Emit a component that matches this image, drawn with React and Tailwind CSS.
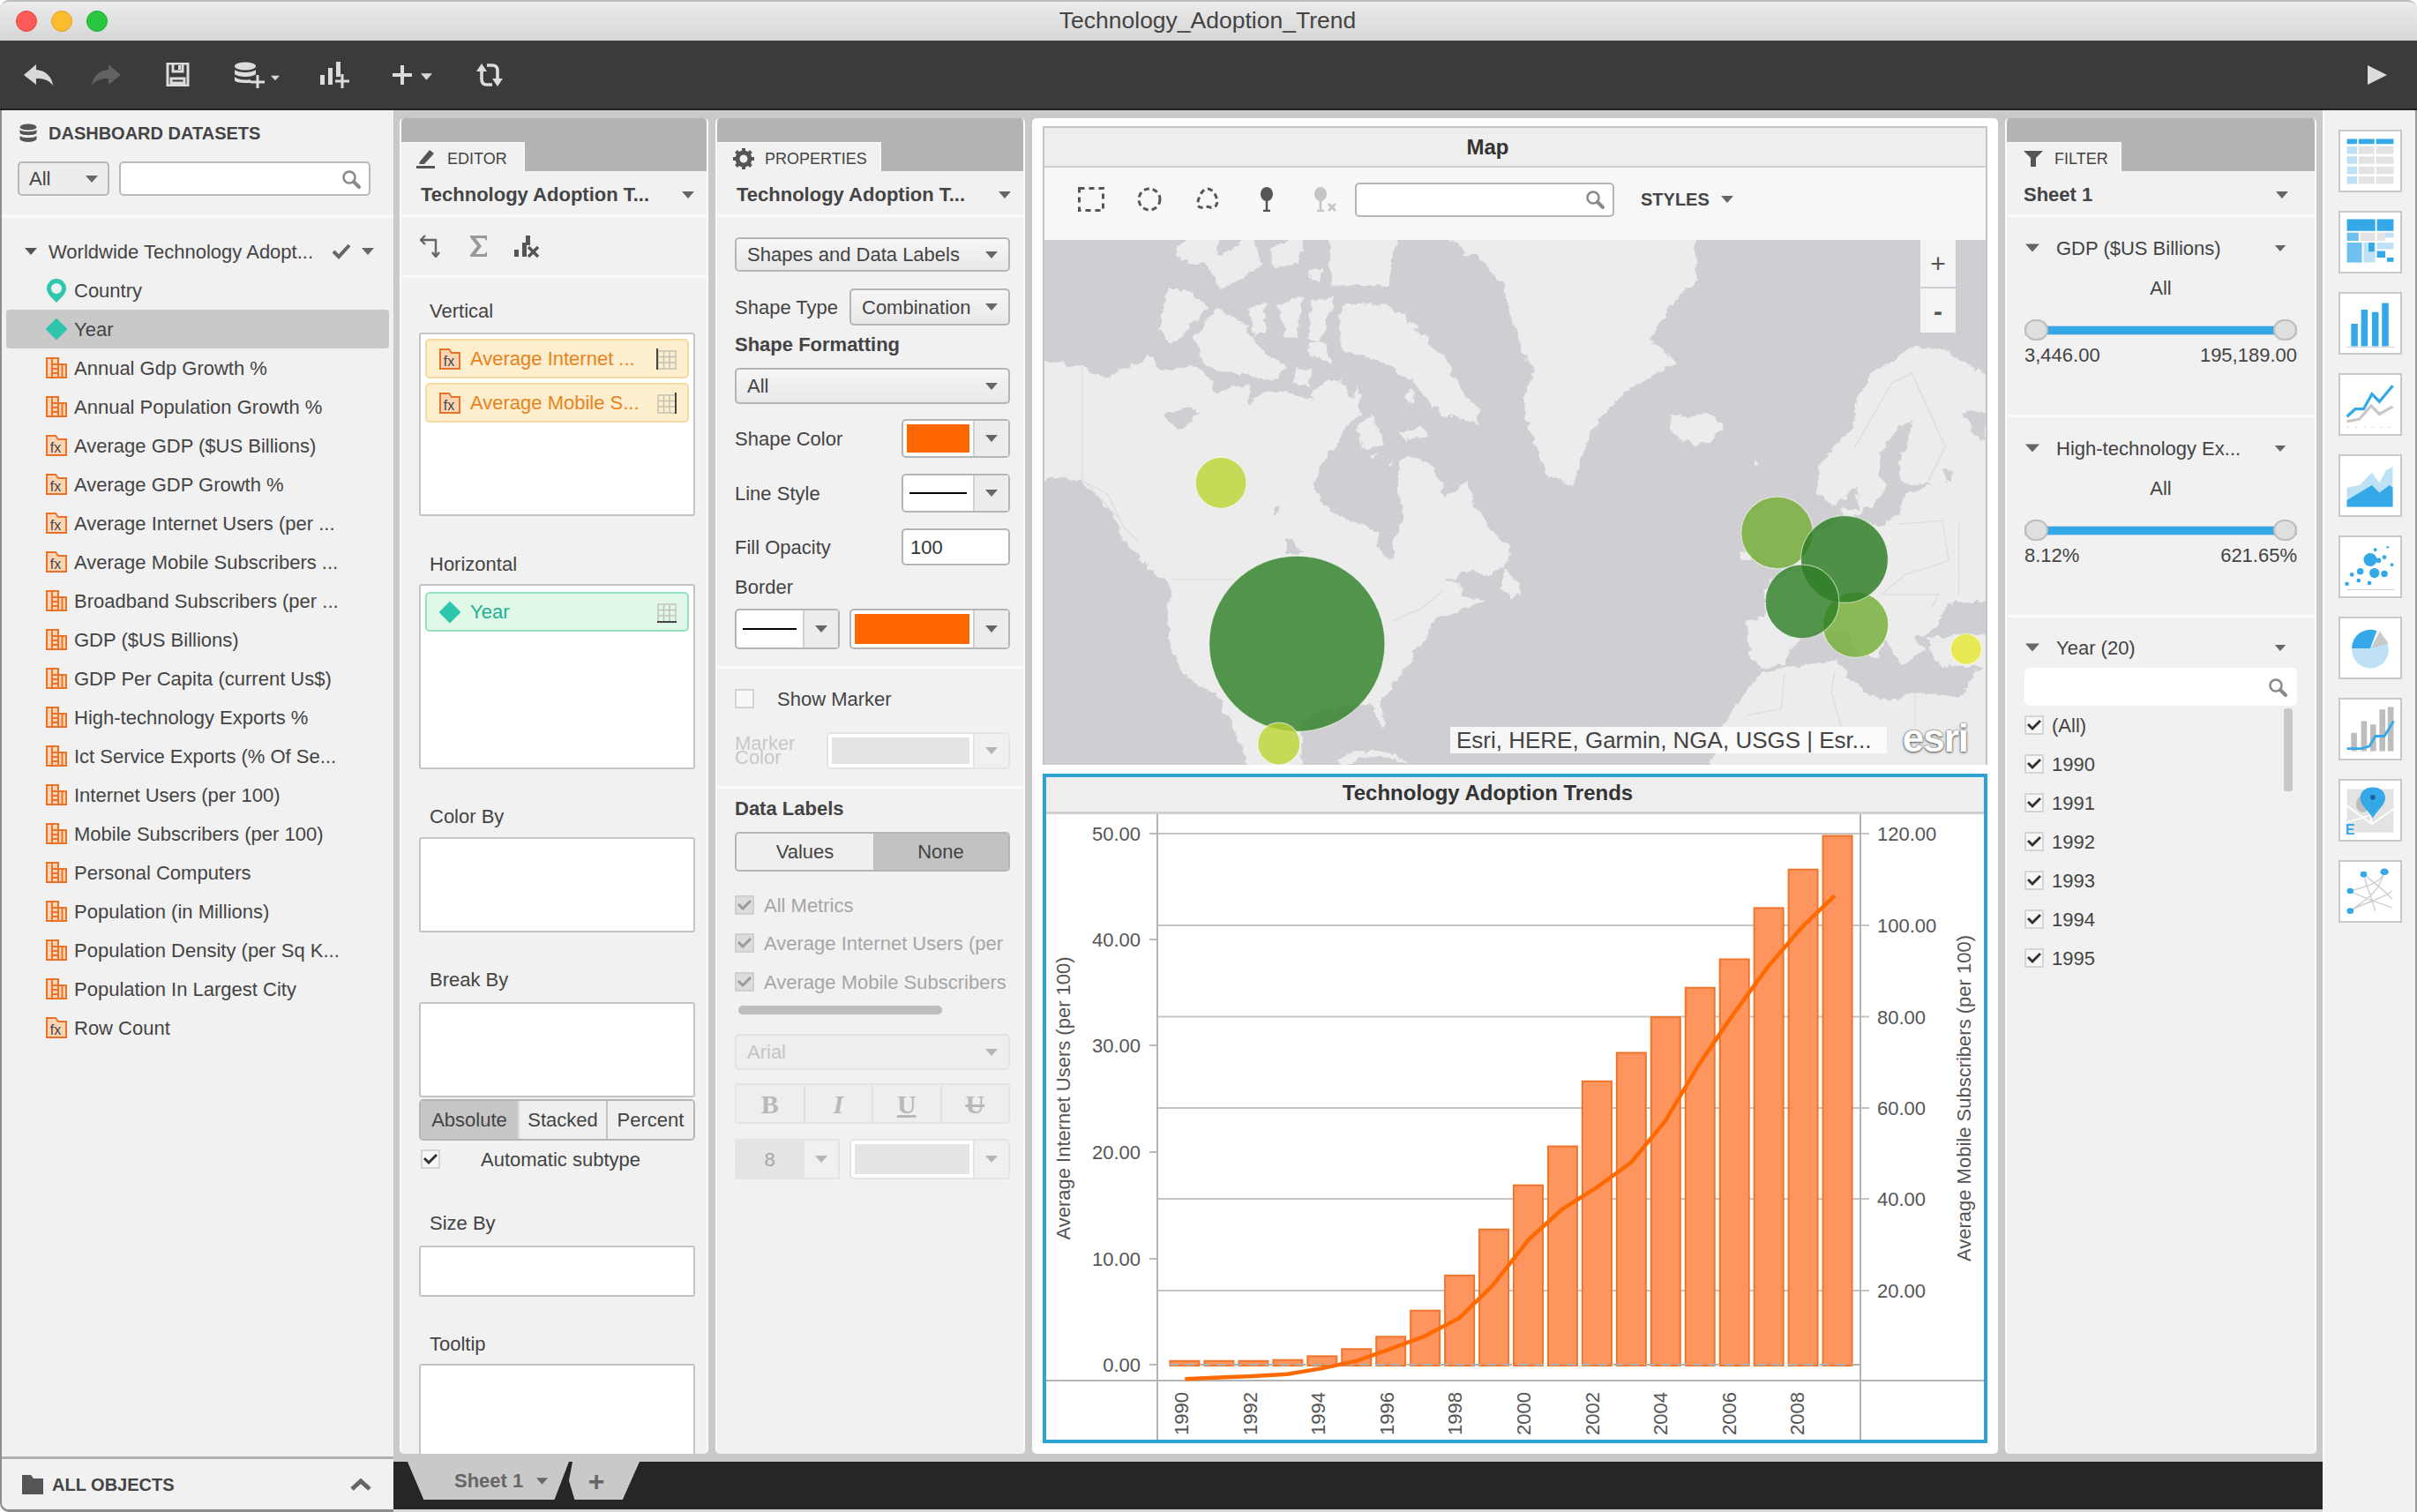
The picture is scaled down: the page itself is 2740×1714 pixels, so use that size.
// App.jsx
import React from "react";

const Caret = ({ className = "", color = "#666", w = 16, h = 9 }) => (
  <svg width={w} height={h} viewBox="0 0 16 9" className={"shrink-0 " + className}>
    <polygon points="0,0 16,0 8,9" fill={color} />
  </svg>
);

const Search = ({ color = "#8a8a8a" }) => (
  <svg width="24" height="24" viewBox="0 0 24 24" className="shrink-0">
    <circle cx="10" cy="10" r="6.5" fill="none" stroke={color} strokeWidth="2.6" />
    <path d="M15 15l6 6" stroke={color} strokeWidth="4" strokeLinecap="round" />
  </svg>
);

const Check = ({ muted = false }) => (
  <span className={"flex items-center justify-center w-[22px] h-[22px] shrink-0 border-2 " + (muted ? "bg-[#dcdcdc] border-[#d0d0d0]" : "bg-[#f6f6f6] border-[#d4d4d4]")}>
    <svg width="16" height="14" viewBox="0 0 16 14">
      <path d="M1 6l5 5 9-9" fill="none" stroke={muted ? "#9a9a9a" : "#333"} strokeWidth="3" />
    </svg>
  </span>
);

const BarDoc = () => (
  <svg width="24" height="24" viewBox="0 0 24 24" className="shrink-0">
    <path d="M1 1h13v7h9v15H1z" fill="#fcd6b4" stroke="#e8722a" strokeWidth="2" />
    <path d="M7 1v22M7 8h7M7 13h7M7 18h7M14 8v15M18.500 8v15" fill="none" stroke="#e8722a" strokeWidth="2" />
  </svg>
);

const FxDoc = () => (
  <svg width="24" height="24" viewBox="0 0 24 24" className="shrink-0">
    <path d="M1 1h10l3 4h9v18H1z" fill="#fcd6b4" stroke="#e8722a" strokeWidth="2" />
    <text x="11" y="20" textAnchor="middle" fontSize="16" fontFamily="'Liberation Sans',sans-serif" fill="#444">fx</text>
  </svg>
);

const Diamond = ({ size = 24 }) => (
  <svg width={size} height={size} viewBox="0 0 24 24" className="shrink-0">
    <polygon points="12,1 23,12 12,23 1,12" fill="#2ec6ad" stroke="#2ec6ad" strokeWidth="2" strokeLinejoin="round" />
  </svg>
);

const Pin = () => (
  <svg width="24" height="28" viewBox="0 0 24 28" className="shrink-0">
    <path d="M12 1a11 11 0 0 1 11 11c0 6-6 11-11 16C7 23 1 18 1 12A11 11 0 0 1 12 1z" fill="#2ec6ad" />
    <circle cx="12" cy="12" r="6" fill="#f1f1f1" />
  </svg>
);

const fields = [
  ["Annual Gdp Growth %", "bar"],
  ["Annual Population Growth %", "bar"],
  ["Average GDP ($US Billions)", "fx"],
  ["Average GDP Growth %", "fx"],
  ["Average Internet Users (per ...", "fx"],
  ["Average Mobile Subscribers ...", "fx"],
  ["Broadband Subscribers (per ...", "bar"],
  ["GDP ($US Billions)", "bar"],
  ["GDP Per Capita (current Us$)", "bar"],
  ["High-technology Exports %", "bar"],
  ["Ict Service Exports (% Of Se...", "bar"],
  ["Internet Users (per 100)", "bar"],
  ["Mobile Subscribers (per 100)", "bar"],
  ["Personal Computers", "bar"],
  ["Population (in Millions)", "bar"],
  ["Population Density (per Sq K...", "bar"],
  ["Population In Largest City", "bar"],
  ["Row Count", "fx"],
];

const TitleBar = () => (
  <div className="relative flex items-center h-[46px] shrink-0 rounded-t-[10px] border-t-2 border-[#bdbdbd] bg-gradient-to-b from-[#ececec] to-[#d6d6d6]">
    <div className="flex items-center gap-[16px] pl-[18px]">
      <span className="w-[24px] h-[24px] rounded-full bg-[#fc5b57] border border-[#df4744]" />
      <span className="w-[24px] h-[24px] rounded-full bg-[#fdbc2e] border border-[#dfa023]" />
      <span className="w-[24px] h-[24px] rounded-full bg-[#29c73f] border border-[#1fab30]" />
    </div>
    <div className="flex-1 text-center text-[26.5px] text-[#444] pr-[124px]">Technology_Adoption_Trend</div>
  </div>
);

const Toolbar = () => (
  <div className="flex items-center h-[79px] shrink-0 pl-[26px] pr-[33px] bg-[#3b3b3b] border-b-2 border-[#222] text-[#d8d8d8]">
    <svg width="35" height="26" viewBox="0 0 35 26">
      <path d="M15 1L1 13l14 11v-7c8 0 14 1 19 8-1-10-8-17-19-18z" fill="#d8d8d8" />
    </svg>
    <svg width="35" height="26" viewBox="0 0 35 26" className="ml-[42px]">
      <path d="M20 1l14 12-14 11v-7c-8 0-14 1-19 8 1-10 8-17 19-18z" fill="#626262" />
    </svg>
    <svg width="27" height="27" viewBox="0 0 27 27" className="ml-[50px]">
      <path d="M2 1h23v25H2zM8 1v9h11V1M6 18h15v5H6z" fill="none" stroke="#dcdcdc" strokeWidth="3" />
      <path d="M14 3h3v5h-3z" fill="#dcdcdc" />
    </svg>
    <svg width="36" height="30" viewBox="0 0 36 30" className="ml-[50px]">
      <ellipse cx="13" cy="5" rx="12" ry="4.5" fill="#dcdcdc" />
      <path d="M1 9c4 4 20 4 24 0v5c-4 4-20 4-24 0zM1 17c4 4 14 4 18 3v4h-6c-6 0-12-1-12-3z" fill="#dcdcdc" />
      <path d="M27 15v15M19 23h16" stroke="#dcdcdc" strokeWidth="3" />
    </svg>
    <Caret color="#d8d8d8" w={10} h={7} className="ml-[6px] mt-[8px]" />
    <svg width="36" height="32" viewBox="0 0 36 32" className="ml-[44px]">
      <path d="M2 16h5v11H2zM11 8h5v19h-5zM20 1h5v17h-5z" fill="#dcdcdc" />
      <path d="M27 15v16M19 23h16" stroke="#dcdcdc" strokeWidth="3" />
    </svg>
    <svg width="24" height="24" viewBox="0 0 24 24" className="ml-[47px]">
      <path d="M12 1v22M1 12h22" stroke="#dcdcdc" strokeWidth="4" />
    </svg>
    <Caret color="#d8d8d8" w={13} h={8} className="ml-[9px] mt-[4px]" />
    <svg width="30" height="30" viewBox="0 0 30 30" className="ml-[50px]">
      <path d="M6 8v12c0 4 2 6 6 6h6M24 22V10c0-4-2-6-6-6h-6" fill="none" stroke="#dcdcdc" strokeWidth="3.6" />
      <path d="M0 11l6-9 6 9zM18 19l6 9 6-9z" fill="#dcdcdc" />
    </svg>
    <svg width="24" height="24" viewBox="0 0 24 24" className="ml-auto">
      <polygon points="1,1 23,12 1,23" fill="#dcdcdc" />
    </svg>
  </div>
);

const LeftPanel = () => (
  <div className="flex flex-col w-[446px] shrink-0 bg-[#f1f1f1] border-l-2 border-[#8d8d8d] rounded-bl-[10px] border-b-3">
    <div className="flex items-center h-[51px] pl-[20px] gap-[13px]">
      <svg width="20" height="22" viewBox="0 0 20 22">
        <ellipse cx="10" cy="4" rx="9.5" ry="3.6" fill="#555" />
        <path d="M.5 7c3 3 16 3 19 0v4c-3 3-16 3-19 0zM.5 14c3 3 16 3 19 0v4c-3 4-16 4-19 0z" fill="#555" />
      </svg>
      <span className="text-[20px] font-bold text-[#444]">DASHBOARD DATASETS</span>
    </div>
    <div className="flex items-center mt-[7px] ml-[18px] gap-[11px]">
      <div className="flex items-center justify-between w-[104px] h-[39px] px-[11px] rounded-[5px] border-2 border-[#b9b9b9] bg-[#ededed] text-[22px] text-[#444]">
        All
        <Caret w={14} h={8} />
      </div>
      <div className="flex items-center justify-end w-[285px] h-[39px] pr-[8px] rounded-[5px] border-2 border-[#b9b9b9] bg-white">
        <Search />
      </div>
    </div>
    <div className="mt-[22px] h-[3px] bg-[#fafafa]" />
    <div className="flex items-center h-[44px] mt-[16px] pl-[26px] text-[22px] text-[#444]">
      <Caret w={14} h={14} className="mr-[13px]" color="#555" />
      <span>Worldwide Technology Adopt...</span>
      <svg width="22" height="18" viewBox="0 0 22 18" className="ml-[21px]">
        <path d="M2 9l6 6L20 2" fill="none" stroke="#666" strokeWidth="4" />
      </svg>
      <Caret w={14} h={8} className="ml-[12px]" />
    </div>
    <div className="flex items-center h-[44px] pl-[50px] gap-[8px] text-[22px] text-[#444]">
      <Pin />
      Country
    </div>
    <div className="flex items-center h-[44px] mx-[5px] pl-[45px] gap-[8px] rounded-[4px] bg-[#c9c9c9] text-[22px] text-[#444]">
      <Diamond />
      Year
    </div>
    {fields.map(([name, kind]) => (
      <div key={name} className="flex items-center h-[44px] pl-[50px] gap-[8px] text-[22px] text-[#444] whitespace-nowrap">
        {kind === "bar" ? <BarDoc /> : <FxDoc />}
        {name}
      </div>
    ))}
    <div className="mt-auto flex items-center h-[60px] pl-[22px] pr-[25px] border-t-3 border-[#b0b0b0]">
      <svg width="26" height="24" viewBox="0 0 26 24">
        <path d="M1 1h10l3 4h11v18H1z" fill="#555" />
      </svg>
      <span className="ml-[9px] text-[20px] font-bold text-[#444]">ALL OBJECTS</span>
      <svg width="24" height="14" viewBox="0 0 24 14" className="ml-auto">
        <path d="M2 12L12 3l10 9" fill="none" stroke="#666" strokeWidth="5" />
      </svg>
    </div>
  </div>
);

const PanelTab = ({ icon, label, width }) => (
  <div className="flex items-end h-[60px] shrink-0 bg-[#b3b3b3]">
    <div className="flex items-center h-[33px] pt-[3px] bg-[#f1f1f1] border-r-2 border-t-2 border-[#f6f6f6]" style={{ width }}>
      {icon}
      <span className="text-[18px] text-[#444]">{label}</span>
    </div>
  </div>
);

const TitleRow = ({ title, caretClass = "", pad = "pl-[22px]" }) => (
  <div className={"flex items-center justify-between h-[52px] shrink-0 pt-[4px] pr-[14px] border-b-3 border-[#fafafa] " + pad}>
    <span className="text-[22px] font-bold text-[#444]">{title}</span>
    <Caret w={14} h={8} className={caretClass} />
  </div>
);

const Drop = ({ children, className = "", muted = false }) => (
  <div className={"flex items-center justify-between pl-[12px] pr-[12px] rounded-[5px] border-2 text-[22px] " + (muted ? "border-[#e2e2e2] bg-[#eeeeee] text-[#c4c4c4] " : "border-[#b5b5b5] bg-gradient-to-b from-[#f6f6f6] to-[#e8e8e8] text-[#444] ") + className}>
    {children}
    <Caret w={14} h={8} color={muted ? "#b5b5b5" : "#666"} />
  </div>
);

const Swatch = ({ className = "", fill, line, muted = false }) => (
  <div className={"flex rounded-[5px] border-2 bg-white " + (muted ? "border-[#e4e4e4] " : "border-[#b5b5b5] ") + className}>
    <div className="flex flex-1 items-center p-[4px]">
      {line ? <div className="w-full h-[2px] mx-[3px] bg-black" /> : <div className={"w-full h-full " + fill} />}
    </div>
    <div className={"flex items-center justify-center w-[40px] shrink-0 border-l-2 " + (muted ? "border-[#e4e4e4] bg-[#f0f0f0]" : "border-[#d0d0d0] bg-[#ececec]")}>
      <Caret w={14} h={8} color={muted ? "#b5b5b5" : "#666"} />
    </div>
  </div>
);

const Pill = ({ label, green, tail, className = "" }) => (
  <div className={"flex items-center h-[45px] pl-[14px] pr-[12px] rounded-[5px] border-2 text-[22px] whitespace-nowrap " + (green ? "bg-[#e0f8e8] border-[#94e3c0] text-[#1eb092] " : "bg-[#fdeecd] border-[#f5d9a0] text-[#e8831c] ") + className}>
    {green ? <Diamond /> : <FxDoc />}
    <span className="ml-[11px]">{label}</span>
    <svg width="24" height="24" viewBox="0 0 24 24" className="ml-auto shrink-0">
      <path d="M3 3h20v20H3zM3 9.5h20M3 16h20M9.5 3v20M16 3v20" fill="none" stroke="#c4c2b4" strokeWidth="1.5" />
      {tail === "left" && <path d="M2 0v24" stroke="#444" strokeWidth="2" />}
      {tail === "right" && <path d="M23 0v24" stroke="#444" strokeWidth="2" />}
      {tail === "bottom" && <path d="M2 23h22" stroke="#444" strokeWidth="2" />}
    </svg>
  </div>
);

const DropBox = ({ className = "", children }) => (
  <div className={"ml-[20px] mr-[13px] shrink-0 rounded-[3px] border-2 border-[#c4c4c4] bg-white " + className}>{children}</div>
);

const FieldLabel = ({ className = "", children }) => (
  <div className={"h-[26px] shrink-0 ml-[32px] text-[22px] leading-[26px] text-[#444] " + className}>{children}</div>
);

const EditorPanel = () => (
  <div className="flex flex-col w-[350px] shrink-0 overflow-hidden rounded-[5px] border-x-2 border-[#fbfbfb] bg-[#f1f1f1]">
    <PanelTab
      width={140}
      label="EDITOR"
      icon={
        <svg width="24" height="22" viewBox="0 0 24 22" className="ml-[16px] mr-[12px]">
          <path d="M5 14L16 1l5 4-11 12H4zM1 19h21v3H1z" fill="#555" />
        </svg>
      }
    />
    <TitleRow title="Technology Adoption T..." />
    <div className="flex items-center h-[69px] shrink-0 pl-[21px] gap-[28px] border-b-3 border-[#fafafa]">
      <svg width="28" height="26" viewBox="0 0 28 26">
        <path d="M1 6h17v18M6 1L1 6l5 5M14 20l4 5 4-5" fill="none" stroke="#666" strokeWidth="2.4" />
      </svg>
      <svg width="22" height="26" viewBox="0 0 22 26">
        <path d="M1 1h19v6l-3-3H7l7 9-7 9h10l3-3v6H1v-2l8-10-8-10z" fill="#999" />
      </svg>
      <svg width="30" height="26" viewBox="0 0 30 26">
        <path d="M1 17h5v8H1zM10 9h5v16h-5zM14 1h5v11h-5z" fill="#555" />
        <path d="M17 14l11 11M28 14L17 25" stroke="#555" strokeWidth="3.4" />
      </svg>
    </div>
    <FieldLabel className="mt-[25px]">Vertical</FieldLabel>
    <DropBox className="mt-[11px] h-[208px] p-[5px]">
      <Pill label="Average Internet ..." tail="left" />
      <Pill label="Average Mobile S..." tail="right" className="mt-[5px]" />
    </DropBox>
    <FieldLabel className="mt-[42px]">Horizontal</FieldLabel>
    <DropBox className="mt-[9px] h-[210px] p-[7px_5px]">
      <Pill green label="Year" tail="bottom" />
    </DropBox>
    <FieldLabel className="mt-[41px]">Color By</FieldLabel>
    <DropBox className="mt-[10px] h-[108px]" />
    <FieldLabel className="mt-[41px]">Break By</FieldLabel>
    <DropBox className="mt-[12px] h-[108px]" />
    <div className="flex ml-[20px] mr-[13px] mt-[2px] h-[47px] shrink-0 overflow-hidden rounded-[5px] border-2 border-[#b5b5b5] text-[22px] text-[#444]">
      <div className="flex items-center justify-center w-[112px] bg-[#c6c6c6] border-r-2 border-[#dcdcdc]">Absolute</div>
      <div className="flex items-center justify-center w-[100px] bg-[#efefef] border-r-2 border-[#c4c4c4]">Stacked</div>
      <div className="flex items-center justify-center flex-1 bg-[#efefef]">Percent</div>
    </div>
    <div className="flex items-center h-[28px] shrink-0 mt-[7px] ml-[22px] text-[22px] text-[#444]">
      <Check />
      <span className="ml-[46px]">Automatic subtype</span>
    </div>
    <FieldLabel className="mt-[46px]">Size By</FieldLabel>
    <DropBox className="mt-[12px] h-[58px]" />
    <FieldLabel className="mt-[41px]">Tooltip</FieldLabel>
    <DropBox className="mt-[9px] h-[110px]" />
  </div>
);

const PropLabel = ({ children, className = "" }) => (
  <span className={"text-[22px] text-[#444] " + className}>{children}</span>
);

const MutedCheck = ({ label, className = "" }) => (
  <div className={"flex items-center h-[28px] gap-[11px] text-[22px] text-[#a6a6a6] whitespace-nowrap overflow-hidden " + className}>
    <Check muted />
    {label}
  </div>
);

const PropertiesPanel = () => (
  <div className="flex flex-col w-[351px] shrink-0 overflow-hidden rounded-[5px] border-x-2 border-[#fbfbfb] bg-[#f1f1f1]">
    <PanelTab
      width={186}
      label="PROPERTIES"
      icon={
        <svg width="24" height="24" viewBox="0 0 24 24" className="ml-[18px] mr-[12px]">
          <circle cx="12" cy="12" r="7" fill="none" stroke="#555" strokeWidth="5" />
          <path d="M12 0v5M12 19v5M0 12h5M19 12h5M3.5 3.5L7 7M17 17l3.500 3.500M20.500 3.500L17 7M7 17l-3.500 3.500" stroke="#555" strokeWidth="4" />
        </svg>
      }
    />
    <TitleRow title="Technology Adoption T..." />
    <div className="flex flex-col pl-[20px] pr-[15px] pb-[19px] border-b-3 border-[#fafafa]">
      <Drop className="h-[39px] mt-[23px]">Shapes and Data Labels</Drop>
      <div className="flex items-center justify-between mt-[19px] h-[42px]">
        <PropLabel>Shape Type</PropLabel>
        <Drop className="w-[182px] h-[42px]">Combination</Drop>
      </div>
      <PropLabel className="mt-[9px] h-[26px] leading-[26px] font-bold">Shape Formatting</PropLabel>
      <Drop className="h-[41px] mt-[13px]">All</Drop>
      <div className="flex items-center justify-between mt-[17px] h-[44px]">
        <PropLabel>Shape Color</PropLabel>
        <Swatch className="w-[123px] h-[44px]" fill="bg-[#ff6600]" />
      </div>
      <div className="flex items-center justify-between mt-[18px] h-[44px]">
        <PropLabel>Line Style</PropLabel>
        <Swatch className="w-[123px] h-[44px]" line />
      </div>
      <div className="flex items-center justify-between mt-[18px] h-[42px]">
        <PropLabel>Fill Opacity</PropLabel>
        <div className="flex items-center w-[123px] h-[42px] pl-[8px] rounded-[5px] border-2 border-[#b5b5b5] bg-white text-[22px] text-[#333]">100</div>
      </div>
      <PropLabel className="mt-[12px] h-[26px] leading-[26px]">Border</PropLabel>
      <div className="flex justify-between mt-[11px]">
        <Swatch className="w-[119px] h-[46px]" line />
        <Swatch className="w-[182px] h-[46px]" fill="bg-[#ff6600]" />
      </div>
    </div>
    <div className="flex flex-col pl-[20px] pr-[15px] pb-[19px] border-b-3 border-[#fafafa]">
      <div className="flex items-center h-[28px] mt-[20px] text-[22px] text-[#444]">
        <span className="w-[22px] h-[22px] border-2 border-[#d4d4d4] bg-[#f8f8f8]" />
        <span className="ml-[26px]">Show Marker</span>
      </div>
      <div className="flex items-center justify-between mt-[24px] h-[42px]">
        <span className="text-[22px] leading-[16px] text-[#c8c8c8]">Marker<br />Color</span>
        <Swatch muted className="w-[208px] h-[42px]" fill="bg-[#e4e4e4]" />
      </div>
    </div>
    <div className="flex flex-col pl-[20px] pr-[15px]">
      <PropLabel className="mt-[10px] h-[26px] leading-[26px] font-bold">Data Labels</PropLabel>
      <div className="flex mt-[13px] h-[45px] overflow-hidden rounded-[5px] border-2 border-[#b5b5b5] text-[22px] text-[#444]">
        <div className="flex items-center justify-center w-[155px] bg-[#efefef]">Values</div>
        <div className="flex items-center justify-center flex-1 bg-[#c2c2c2]">None</div>
      </div>
      <MutedCheck label="All Metrics" className="mt-[24px]" />
      <MutedCheck label="Average Internet Users (per" className="mt-[15px]" />
      <MutedCheck label="Average Mobile Subscribers" className="mt-[16px]" />
      <div className="mt-[13px] ml-[4px] w-[231px] h-[10px] rounded-full bg-[#bdbdbd]" />
      <Drop muted className="h-[41px] mt-[22px]">Arial</Drop>
      <div className="flex mt-[15px] h-[46px] rounded-[3px] border-2 border-[#e4e4e4] bg-[#eeeeee] text-[30px] text-[#b8b8b8] font-['Liberation_Serif',serif]">
        <div className="flex flex-1 items-center justify-center border-r-2 border-[#e0e0e0] font-bold">B</div>
        <div className="flex flex-1 items-center justify-center border-r-2 border-[#e0e0e0] font-bold italic">I</div>
        <div className="flex flex-1 items-center justify-center border-r-2 border-[#e0e0e0] font-bold underline">U</div>
        <div className="flex flex-1 items-center justify-center font-bold line-through">U</div>
      </div>
      <div className="flex justify-between mt-[17px]">
        <div className="flex w-[119px] h-[46px] rounded-[3px] border-2 border-[#e4e4e4] bg-[#f0f0f0]">
          <div className="flex flex-1 items-center justify-center bg-[#e4e4e4] text-[22px] text-[#a6a6a6]">8</div>
          <div className="flex items-center justify-center w-[40px] border-l-2 border-[#e4e4e4]">
            <Caret w={14} h={8} color="#b5b5b5" />
          </div>
        </div>
        <Swatch muted className="w-[182px] h-[46px]" fill="bg-[#e4e4e4]" />
      </div>
    </div>
  </div>
);

const land = "#ececec";
const sea = "#cfcfd3";

const MapCanvas = () => (
  <svg viewBox="1184 272 1067 595" preserveAspectRatio="none" className="block w-full h-full">
    <defs>
      <filter id="coast" x="-2%" y="-2%" width="104%" height="104%">
        <feTurbulence type="fractalNoise" baseFrequency="0.09" numOctaves="4" seed="7" result="n" />
        <feDisplacementMap in="SourceGraphic" in2="n" scale="11" xChannelSelector="R" yChannelSelector="G" />
        <feGaussianBlur stdDeviation="0.6" />
      </filter>
    </defs>
    <rect x="1184" y="272" width="1067" height="595" fill={sea} />
    <g filter="url(#coast)">
      {/* north america, traced at crop scale */}
      <g transform="translate(1183,271) scale(.3801)">
        <g fill={land}>
          <path d="M-30 360L60 370 115 385 190 415 230 390 300 365 315 345 350 395 400 380 460 385 510 425 505 460 580 440 620 440 615 495 650 460 720 455 760 470 800 480 800 450 860 420 900 430 925 480 940 430 945 520 900 560 870 620 820 680 810 750 850 810 940 850 1000 880 1005 930 1030 960 1050 940 1045 880 1080 830 1060 760 1060 660 1110 650 1170 680 1195 770 1240 740 1260 720 1290 800 1340 880 1390 920 1385 960 1340 1000 1250 990 1190 1030 1240 1020 1250 1070 1320 1075 1270 1100 1170 1130 1130 1200 1080 1280 1040 1330 1000 1390 1025 1460 1010 1460 980 1390 900 1390 830 1400 770 1440 770 1600 620 1600 585 1500 510 1350 480 1340 430 1310 380 1220 370 1100 380 1030 310 980 240 890 180 780 110 720 30 710 -30 730Z" />
          <path d="M890 200L950 190 1020 195 1080 230 1130 290 1200 360 1220 400 1260 470 1305 510 1290 550 1230 530 1250 600 1220 540 1160 500 1100 420 1010 370 950 350 890 330 880 270Z" />
          <path d="M450 290L510 210 590 240 640 320 720 380 700 420 560 400 480 380Z" />
          <path d="M370 150L420 150 490 200 450 250 380 320 345 270Z" />
          <path d="M610 210L660 190 660 280 630 290ZM700 200L770 170 760 300 720 280ZM800 180L870 175 830 300 790 300ZM790 310L830 300 860 370 800 350ZM760 385L800 390 790 440 740 430Z" />
          <path d="M390 40L440 -20 540 -20 510 60 440 80ZM480 60L560 30 620 -20 650 80 530 150ZM670 30L780 -20 760 70 690 90ZM790 100L830 90 820 130ZM850 30L860 -20 1060 -20 1035 80 1030 140 860 140Z" />
          <path d="M930 560L980 530 1020 610 960 630ZM1060 580L1130 560 1150 590 1080 600ZM1370 980L1430 1050 1400 1070 1360 1040ZM975 650L1000 640 990 660ZM1030 670L1045 655 1035 680ZM1075 470L1100 450 1110 480 1085 490Z" />
          <path d="M870 1560L920 1530 1000 1520 1090 1560 1040 1550 960 1540 900 1575Z" />
          <path d="M1180 -20L1300 60 1370 130 1400 260 1470 370 1440 450 1450 560 1500 700 1568 730 1568 -20Z" />
        </g>
        <g fill={sea}>
          <path d="M360 525L440 500 465 520 400 570 380 550ZM690 800L705 790 695 830 685 830ZM720 900L745 895 775 940 725 935ZM1210 520L1250 550 1260 620 1235 590Z" />
        </g>
      </g>
      {/* atlantic and europe */}
      <g transform="translate(1658,271) scale(.3801)">
        <g fill={land}>
          <path d="M0 -20H690L700 120 620 200 560 300 640 370 500 440 390 560 360 640 330 735 260 680 200 570 180 470 220 400 180 340 150 230 110 100 40 50 0 45Z" />
          <path d="M620 530L680 530 740 515 780 560 740 600 690 620 650 590 620 570Z" />
          <path d="M1060 680L1110 620 1160 570 1180 470 1220 400 1290 360 1350 320 1440 330 1600 430 1600 1070 1500 1080 1450 1090 1400 1170 1350 1190 1380 1230 1340 1260 1310 1270 1260 1190 1240 1250 1180 1240 1150 1170 1080 1170 1000 1190 960 1270 890 1280 855 1240 850 1140 900 1130 905 1030 990 980 1050 880 1130 830 1130 800 1170 810 1185 800 1170 730 1140 770 1100 790 1060 760Z" />
          <path d="M825 930L870 930 860 960 830 960ZM868 660L885 660 880 672 868 672Z" />
          <path d="M770 1455L850 1340 900 1290 1000 1270 1120 1260 1150 1310 1220 1360 1280 1380 1350 1350 1480 1370 1500 1340 1530 1290 1600 1260 1600 1600 740 1600Z" />
          <path d="M1380 1190L1600 1170 1600 1280 1420 1270Z" />
        </g>
        <g fill={sea}>
          <path d="M1345 540L1300 560 1245 640 1240 700 1265 730 1225 800 1190 810 1170 830 1240 860 1300 820 1320 760 1400 735 1310 725 1300 670 1330 590Z" />
          <path d="M1500 510L1560 520 1560 600 1520 590ZM1435 690L1465 690 1460 725 1440 720Z" />
        </g>
      </g>
    </g>
    <path transform="translate(1183,271) scale(.3801)" fill="none" stroke="#dedede" strokeWidth="4" d="M115 385V720L190 760 240 860 280 900M385 1015H570M1040 1140L1130 1100 1190 1050M130 730L220 830" />
    <path transform="translate(1658,271) scale(.3801)" fill="none" stroke="#dedede" strokeWidth="4" d="M1170 620L1280 430 1340 400M1340 400L1440 620 1390 720M1300 850L1430 840 1450 960 1320 1000 1250 1060 1420 1060 1400 1100M1480 840V1060M960 1300L950 1400 850 1420M1110 1290L1100 1350 1130 1460M1350 1360V1450" />
    <g fillOpacity="0.8" stroke="#ffffff" strokeOpacity="0.55" strokeWidth="3">
      <g transform="translate(1183,271) scale(.3801)">
        <circle cx="529" cy="727" r="76" fill="#bdd632" />
        <circle cx="756" cy="1207" r="262" fill="#2d7e24" />
        <circle cx="702" cy="1505" r="63" fill="#bdd632" />
      </g>
      <g transform="translate(1658,271) scale(.3801)">
        <circle cx="938" cy="876" r="107" fill="#73ac32" />
        <circle cx="1172" cy="1150" r="98" fill="#73ac32" />
        <circle cx="1139" cy="955" r="130" fill="#287920" />
        <circle cx="1013" cy="1081" r="110" fill="#2d7e24" />
        <circle cx="1502" cy="1223" r="46" fill="#e7ea2f" />
      </g>
    </g>
  </svg>
);

const MapPanel = () => (
  <div className="flex flex-col h-[724px] shrink-0 border-2 border-[#c4c4c4] border-b-0 overflow-hidden">
    <div className="flex items-center justify-center h-[45px] shrink-0 pr-[62px] bg-[#eeeeee] border-b-2 border-[#cdcdcd] text-[24px] font-bold text-[#333]">Map</div>
    <div className="flex items-center h-[82px] shrink-0 pl-[38px] pb-[10px] bg-[#f7f7f7]">
      <svg width="30" height="28" viewBox="0 0 30 28">
        <rect x="1.500" y="1.500" width="27" height="25" fill="none" stroke="#555" strokeWidth="3" strokeDasharray="6 5" />
      </svg>
      <svg width="28" height="28" viewBox="0 0 28 28" className="ml-[37px]">
        <circle cx="14" cy="14" r="12" fill="none" stroke="#555" strokeWidth="3" strokeDasharray="6 4" />
      </svg>
      <svg width="28" height="28" viewBox="0 0 28 28" className="ml-[38px]">
        <path d="M14 2c6 0 10 8 11 14 0 5-3 8-8 7-3-1-5-1-8 0-4 1-7-1-6-6 1-6 5-15 11-15z" fill="none" stroke="#555" strokeWidth="3" strokeDasharray="6 4" />
      </svg>
      <svg width="18" height="28" viewBox="0 0 18 28" className="ml-[44px]">
        <ellipse cx="9" cy="8" rx="7" ry="8" fill="#555" />
        <path d="M9 14v13M5 27h8" stroke="#555" strokeWidth="2.500" />
      </svg>
      <svg width="28" height="28" viewBox="0 0 28 28" className="ml-[43px]">
        <ellipse cx="9" cy="8" rx="7" ry="8" fill="#c4c4c4" />
        <path d="M9 14v13M5 27h8M18 19l8 8M26 19l-8 8" stroke="#c4c4c4" strokeWidth="2.500" />
      </svg>
      <div className="flex items-center justify-end ml-[20px] w-[294px] h-[39px] pr-[8px] rounded-[5px] border-2 border-[#b5b5b5] bg-white">
        <Search />
      </div>
      <span className="ml-[30px] text-[20px] font-bold text-[#444]">STYLES</span>
      <Caret w={14} h={8} className="ml-[13px]" />
    </div>
    <div className="relative flex-1 min-h-0">
      <MapCanvas />
      <div className="absolute top-0 right-[34px] flex flex-col gap-[2px]">
        <div className="flex items-center justify-center w-[40px] h-[53px] bg-[#f4f4f4] text-[30px] font-light text-[#555]">+</div>
        <div className="flex items-center justify-center w-[40px] h-[50px] bg-[#f4f4f4] text-[30px] font-bold text-[#555]">-</div>
      </div>
      <div className="absolute left-[460px] bottom-[13px] flex items-center h-[30px] w-[495px] pl-[7px] bg-[#ffffffcc] text-[26px] text-[#444] whitespace-nowrap">Esri, HERE, Garmin, NGA, USGS | Esr...</div>
      <div className="absolute right-[20px] bottom-[8px] text-[44px] leading-[44px] font-bold text-white tracking-[-1px] [text-shadow:0_0_2px_#555,0_1px_3px_#555]">esri</div>
    </div>
  </div>
);

const years = [1990, 1992, 1994, 1996, 1998, 2000, 2002, 2004, 2006, 2008];
const barTops = [1250, 1250, 1250, 1248, 1240, 1225, 1199, 1144, 1070, 973, 880, 798, 661, 601, 526, 464, 404, 296, 215, 144];
const lineZoom = [
  [247, 1288], [302, 1285], [357, 1282], [412, 1278], [467, 1266], [524, 1250], [578, 1225], [634, 1198], [690, 1160], [745, 1090],
  [802, 995], [857, 930], [912, 885], [968, 832], [1023, 745], [1078, 625], [1133, 520], [1189, 420], [1245, 335], [1297, 270],
];
const zx = (v) => v / 1.4255 + 1170;
const zy = (v) => v / 1.858 + 870;

const TrendChart = () => (
  <svg viewBox="1186 923 1063 709" className="block w-full flex-1 min-h-0" fontFamily="'Liberation Sans',sans-serif" fontSize="22" fill="#555">
    {[945, 1049, 1152.5, 1256, 1359, 1463].map((y) => (
      <line key={y} x1="1312" x2="2119" y1={y} y2={y} stroke="#c4c4c4" strokeWidth="2" />
    ))}
    {[945, 1065, 1185, 1306, 1427, 1547].map((y) => (
      <line key={y} x1="1303" x2="1312" y1={y} y2={y} stroke="#bbb" strokeWidth="2" />
    ))}
    <line x1="1312" x2="1312" y1="922" y2="1633" stroke="#b4b4b4" strokeWidth="2" />
    <line x1="2109" x2="2109" y1="922" y2="1633" stroke="#b4b4b4" strokeWidth="2" />
    <line x1="1186" x2="2249" y1="1565" y2="1565" stroke="#b4b4b4" strokeWidth="2" />
    {barTops.map((t, i) => {
      const cx = 1343 + i * 38.95;
      const top = zy(t);
      return <rect key={i} x={cx - 16.5} y={top} width="33" height={1548 - top} fill="#ff955e" stroke="#f0752a" strokeWidth="2" />;
    })}
    <line x1="1325" x2="2109" y1="1547" y2="1547" stroke="#b0b0b0" strokeWidth="2" strokeDasharray="11 7" />
    <polyline points={lineZoom.map(([x, y]) => `${zx(x)},${zy(y)}`).join(" ")} fill="none" stroke="#ff6a00" strokeWidth="4.500" strokeLinejoin="round" />
    {[["50.00", 945], ["40.00", 1065], ["30.00", 1185], ["20.00", 1306], ["10.00", 1427], ["0.00", 1547]].map(([t, y]) => (
      <text key={t} x="1293" y={y + 8} textAnchor="end">{t}</text>
    ))}
    {[["120.00", 945], ["100.00", 1049], ["80.00", 1152.5], ["60.00", 1256], ["40.00", 1359], ["20.00", 1463]].map(([t, y]) => (
      <text key={t} x="2128" y={y + 8}>{t}</text>
    ))}
    <text transform="translate(1213,1245) rotate(-90)" textAnchor="middle">Average Internet Users (per 100)</text>
    <text transform="translate(2234,1245) rotate(-90)" textAnchor="middle">Average Mobile Subscribers (per 100)</text>
    {years.map((y, i) => (
      <text key={y} transform={`translate(${1347 + i * 77.6},1627) rotate(-90)`}>{y}</text>
    ))}
  </svg>
);

const ChartPanel = () => (
  <div className="flex flex-col h-[759px] mt-[10px] shrink-0 border-[4px] border-[#2ea2d1] bg-white overflow-hidden">
    <div className="flex items-center justify-center h-[42px] shrink-0 pr-[62px] pb-[3px] bg-[#eeeeee] border-b-3 border-[#d0d0d0] text-[24px] font-bold text-[#333]">Technology Adoption Trends</div>
    <TrendChart />
  </div>
);

const Slider = () => (
  <div className="relative mx-[20px] h-[24px] flex items-center">
    <div className="w-full h-[11px] bg-[#35a8e8] border border-[#bcd4e2]" />
    <span className="absolute left-0 top-0 w-[27px] h-[24px] rounded-full border-2 border-[#bdbdbd] bg-[#dfdfdf]" />
    <span className="absolute right-0 top-0 w-[27px] h-[24px] rounded-full border-2 border-[#bdbdbd] bg-[#dfdfdf]" />
  </div>
);

const FilterHead = ({ label, className = "" }) => (
  <div className={"flex items-center h-[30px] pl-[21px] pr-[32px] text-[22px] text-[#444] whitespace-nowrap " + className}>
    <Caret w={16} h={10} className="mr-[19px]" />
    <span>{label}</span>
    <Caret w={14} h={7} className="ml-auto" />
  </div>
);

const RangeBlock = ({ label, lo, hi }) => (
  <div className="flex flex-col h-[227px] shrink-0 pt-[20px] border-b-3 border-[#fafafa]">
    <FilterHead label={label} />
    <div className="mt-[16px] h-[30px] leading-[30px] text-center text-[22px] text-[#444]">All</div>
    <div className="mt-[20px]"><Slider /></div>
    <div className="flex justify-between mx-[20px] mt-[3px] h-[28px] leading-[28px] text-[22px] text-[#444]">
      <span>{lo}</span>
      <span>{hi}</span>
    </div>
  </div>
);

const filterRows = ["(All)", "1990", "1991", "1992", "1993", "1994", "1995"];

const FilterPanel = () => (
  <div className="flex flex-col w-[353px] shrink-0 overflow-hidden rounded-[5px] border-x-2 border-[#fbfbfb] bg-[#f1f1f1]">
    <PanelTab
      width={130}
      label="FILTER"
      icon={
        <svg width="24" height="20" viewBox="0 0 24 20" className="ml-[18px] mr-[12px]">
          <path d="M1 1h22L15 9v10H9V9z" fill="#555" />
        </svg>
      }
    />
    <TitleRow title="Sheet 1" caretClass="mr-[16px]" pad="pl-[19px]" />
    <RangeBlock label="GDP ($US Billions)" lo="3,446.00" hi="195,189.00" />
    <RangeBlock label="High-technology Ex..." lo="8.12%" hi="621.65%" />
    <div className="relative flex flex-col pt-[19px]">
      <FilterHead label="Year (20)" />
      <div className="flex items-center justify-end mx-[20px] mt-[8px] h-[43px] pr-[10px] rounded-[6px] bg-white">
        <Search />
      </div>
      <div className="flex flex-col">
        {filterRows.map((r) => (
          <div key={r} className="flex items-center h-[44px] pl-[20px] gap-[9px] text-[22px] text-[#444]">
            <Check />
            {r}
          </div>
        ))}
      </div>
      <span className="absolute right-[25px] top-[103px] w-[10px] h-[94px] rounded-[3px] bg-[#c8c8c8]" />
    </div>
  </div>
);

const Thumb = ({ children }) => (
  <div className="w-[72px] h-[71px] border-2 border-[#c8c8c8] bg-white">
    <svg width="68" height="67" viewBox="0 0 72 71" preserveAspectRatio="none">{children}</svg>
  </div>
);

const blue = "#35a8e8";
const pale = "#bfe1f6";

const ChartStrip = () => (
  <div className="flex flex-col items-center w-[107px] shrink-0 pt-[22px] gap-[21px] bg-[#f1f1f1] border-l-2 border-[#fafafa] border-r-2 border-r-[#9a9a9a]">
    <Thumb>
      <path d="M8 9h12v6H8zM22 9h19v6H22zM43 9h21v6H43z" fill={blue} />
      <path d="M8 18h12v9H8zM8 30h12v9H8zM8 42h12v9H8zM8 54h12v9H8z" fill={pale} />
      <path d="M22 18h19v9H22zM43 18h21v9H43zM22 30h19v9H22zM43 30h21v9H43zM22 42h19v9H22zM43 42h21v9H43zM22 54h19v9H22zM43 54h21v9H43z" fill="#e3e3e3" />
    </Thumb>
    <Thumb>
      <path d="M8 8h34v14H8zM44 8h20v14H44z" fill={blue} />
      <path d="M8 24h14v10H8z" fill="#6fc0ee" />
      <path d="M24 24h18v10H24zM44 24h10v10H44z" fill="#e3e3e3" />
      <path d="M54 24h10v6H54z" fill={pale} />
      <path d="M8 36h18v24H8z" fill="#6fc0ee" />
      <path d="M28 36h14v24H28zM44 36h20v8H44z" fill={pale} />
      <path d="M34 36h7v11h-7zM44 46h10v8H44zM56 54h8v5h-8z" fill={blue} />
    </Thumb>
    <Thumb>
      <path d="M13 36h8v27h-8zM25 19h8v44h-8zM38 22h8v41h-8zM50 11h8v52h-8z" fill={blue} />
      <path d="M8 64h57" stroke="#ccc" strokeWidth="1" />
    </Thumb>
    <Thumb>
      <path d="M8 56l15-3 14-16 10 10 16-9" fill="none" stroke="#c8c8c8" strokeWidth="3.500" />
      <path d="M8 50l10-9h10l10-18 9 9 16-19" fill="none" stroke={blue} strokeWidth="3.500" />
      <path d="M8 63h57" stroke="#ccc" strokeWidth="1" strokeDasharray="2 8" />
    </Thumb>
    <Thumb>
      <path d="M8 38l15-3 15-15 9 12 8-15 8-4v48H8z" fill={pale} />
      <path d="M8 53l15-9 15-9 9 9 12-9 4 3v23H8z" fill={blue} />
    </Thumb>
    <Thumb>
      <circle cx="36" cy="27" r="8" fill={blue} />
      <circle cx="41" cy="43" r="6" fill={blue} />
      <circle cx="24" cy="41" r="4" fill={blue} />
      <circle cx="53" cy="44" r="4" fill={blue} />
      <circle cx="46" cy="28" r="3" fill={blue} />
      <circle cx="53" cy="24" r="2.500" fill={blue} />
      <circle cx="42" cy="15" r="2" fill={blue} />
      <circle cx="57" cy="12" r="1.500" fill={blue} />
      <circle cx="62" cy="33" r="2" fill={blue} />
      <circle cx="14" cy="45" r="2.500" fill={blue} />
      <circle cx="8" cy="56" r="2.500" fill={blue} />
      <circle cx="22" cy="52" r="2.500" fill={blue} />
      <circle cx="35" cy="55" r="2.500" fill={blue} />
      <path d="M8 63h57" stroke="#ccc" strokeWidth="1" />
    </Thumb>
    <Thumb>
      <ellipse cx="36" cy="38" rx="22" ry="22" fill={pale} />
      <path d="M36 36L14 36A22 22 0 0 1 44 15z" fill={blue} />
      <path d="M38 36L47 15 58 30z" fill="#c8c8c8" />
      <path d="M36 36L44 15 47 17z" fill="#fff" />
    </Thumb>
    <Thumb>
      <path d="M13 40h7v22h-7zM25 26h7v36h-7zM36 30h7v32h-7zM47 12h7v50h-7zM57 9h7v53h-7z" fill="#bdbdbd" />
      <path d="M8 59h18l9-3 7-12h11l11-18" fill="none" stroke={blue} strokeWidth="3" />
    </Thumb>
    <Thumb>
      <path d="M8 10h56v52H8z" fill="#e3e3e3" />
      <path d="M8 30l30 22 26-18M30 10l8 42M8 50l26-8" stroke="#fff" strokeWidth="2" fill="none" />
      <ellipse cx="27" cy="28" rx="8" ry="10" fill="#bdbdbd" />
      <path d="M39 8c9 0 15 5 15 13 0 8-9 14-15 24-6-10-15-16-15-24 0-8 6-13 15-13z" fill={blue} />
      <circle cx="39" cy="20" r="3" fill="#14639a" />
      <text x="6" y="65" fontSize="17" fontWeight="bold" fill={blue} fontFamily="'Liberation Sans',sans-serif">E</text>
    </Thumb>
    <Thumb>
      <path d="M12 35C30 30 50 25 53 12M12 59C30 45 45 40 53 12M28 15C32 30 40 50 42 59M28 15C40 25 55 35 62 45M12 35C30 45 50 50 62 55M12 59C25 50 50 45 62 35" stroke="#cfcfcf" strokeWidth="1.500" fill="none" />
      <ellipse cx="12" cy="35" rx="4" ry="3.500" fill={blue} />
      <ellipse cx="12" cy="59" rx="4" ry="3.500" fill={blue} />
      <ellipse cx="28" cy="15" rx="4" ry="3.500" fill={blue} />
      <ellipse cx="53" cy="12" rx="5" ry="4" fill={blue} />
    </Thumb>
  </div>
);

export default function App() {
  return (
    <div className="flex flex-col w-[2740px] h-[1714px] overflow-hidden bg-white font-['Liberation_Sans',Arial,sans-serif]">
      <TitleBar />
      <Toolbar />
      <div className="flex flex-1 min-h-0">
        <LeftPanel />
        <div className="flex flex-col flex-1 min-w-0 bg-[#c9c9c9]">
          <div className="flex h-[1514px] mt-[9px] ml-[7px] gap-[8px] shrink-0">
            <EditorPanel />
            <PropertiesPanel />
            <div className="flex flex-col w-[1095px] shrink-0 px-[12px] pt-[9px] rounded-[5px] bg-white">
              <MapPanel />
              <ChartPanel />
            </div>
            <FilterPanel />
          </div>
          <div className="flex mt-[9px] h-[54px] pl-[16px] bg-[#262626]">
            <div className="flex items-center w-[183px] h-[43px] pl-[53px] gap-[15px] bg-[#c9c9c9] text-[22px] font-bold text-[#666] [clip-path:polygon(0_0,100%_0,91%_100%,10%_100%)]">
              Sheet 1
              <Caret w={13} h={8} />
            </div>
            <div className="flex items-center justify-center w-[80px] h-[43px] pr-[18px] bg-[#c9c9c9] text-[32px] font-bold text-[#666] [clip-path:polygon(5%_0,100%_0,76%_100%,8%_100%,0_50%)]">+</div>
          </div>
          <div className="flex-1 bg-[#d8d8d8]" />
        </div>
        <ChartStrip />
      </div>
    </div>
  );
}
